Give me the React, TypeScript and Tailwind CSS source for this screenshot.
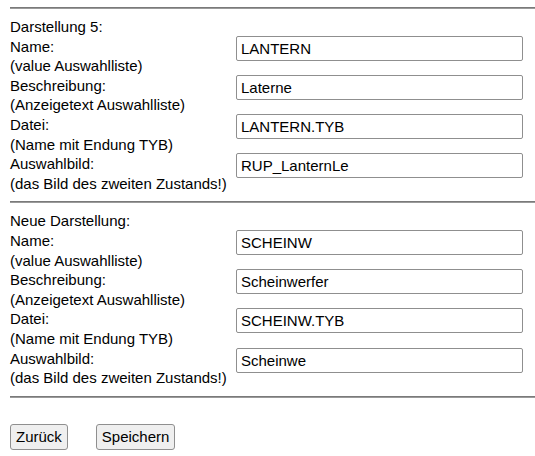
import React from 'react';

type Field = { label: string; hint: string; value: string };

const Section: React.FC<{ title: string; fields: Field[] }> = ({ title, fields }) => (
  <div className="pt-[8px] pb-[8px]">
    <div>{title}</div>
    {fields.map((f) => (
      <div key={f.label} className="flex items-start">
        <div className="w-[226px] shrink-0">
          <div>{f.label}</div>
          <div>{f.hint}</div>
        </div>
        <input
          type="text"
          defaultValue={f.value}
          className="mt-[-1px] h-[25px] w-[287px] rounded-[2px] border border-[#8f8f8f] bg-white px-[4px] text-[15px] text-black outline-none"
          style={{ fontFamily: '"Liberation Sans", Arial, sans-serif' }}
        />
      </div>
    ))}
  </div>
);

const Rule = () => <div className="h-[2px] border-t border-[#7a7a7a] bg-[#9a9a9a]" />;

const App: React.FC = () => {
  const current: Field[] = [
    { label: 'Name:', hint: '(value Auswahlliste)', value: 'LANTERN' },
    { label: 'Beschreibung:', hint: '(Anzeigetext Auswahlliste)', value: 'Laterne' },
    { label: 'Datei:', hint: '(Name mit Endung TYB)', value: 'LANTERN.TYB' },
    { label: 'Auswahlbild:', hint: '(das Bild des zweiten Zustands!)', value: 'RUP_LanternLe' },
  ];
  const neu: Field[] = [
    { label: 'Name:', hint: '(value Auswahlliste)', value: 'SCHEINW' },
    { label: 'Beschreibung:', hint: '(Anzeigetext Auswahlliste)', value: 'Scheinwerfer' },
    { label: 'Datei:', hint: '(Name mit Endung TYB)', value: 'SCHEINW.TYB' },
    { label: 'Auswahlbild:', hint: '(das Bild des zweiten Zustands!)', value: 'Scheinwe' },
  ];

  return (
    <div
      className="min-h-[456px] w-[535px] bg-white pl-[10px] pt-[7px] text-[15px] leading-[19.6px] text-black"
      style={{ fontFamily: '"Liberation Sans", Arial, sans-serif' }}
    >
      <Rule />
      <Section title="Darstellung 5:" fields={current} />
      <Rule />
      <Section title="Neue Darstellung:" fields={neu} />
      <Rule />
      <div className="mt-[26px] flex gap-[28px]">
        <button className="h-[26px] rounded-[3px] border border-[#8f8f8f] bg-[#efefef] px-[5px] text-[15px] text-black">
          Zurück
        </button>
        <button className="h-[26px] rounded-[3px] border border-[#8f8f8f] bg-[#efefef] px-[5px] text-[15px] text-black">
          Speichern
        </button>
      </div>
    </div>
  );
};

export default App;
